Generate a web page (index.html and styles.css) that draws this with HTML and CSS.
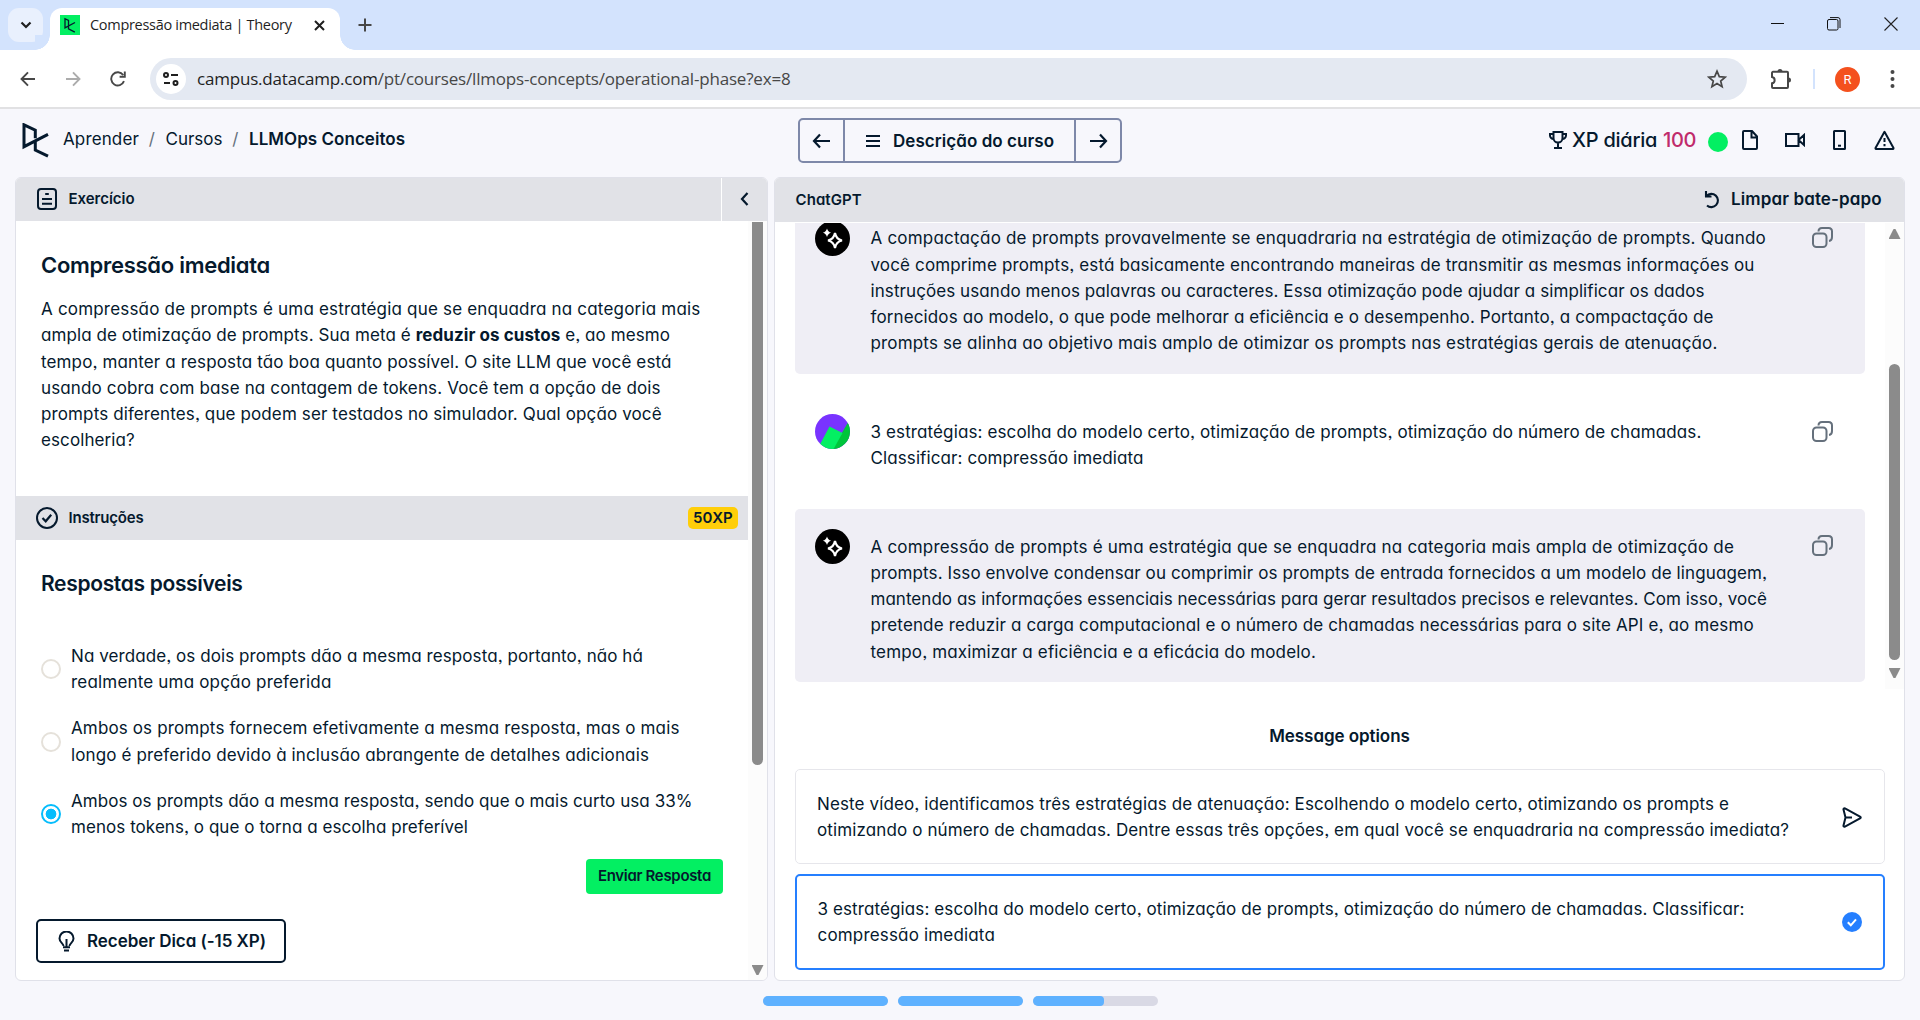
FILE: index.html
```html
<!DOCTYPE html>
<html lang="pt">
<head>
<meta charset="utf-8">
<title>Compressão imediata | Theory</title>
<link rel="stylesheet" href="styles.css">
</head>
<body>
<header class="browser">
  <div class="tabstrip">
    <div class="tab-search"><svg width="12" height="8" viewBox="0 0 12 8"><path d="M1.5 1.5 6 6l4.500-4.500" fill="none" stroke="#1f1f1f" stroke-width="2.200"/></svg></div>
    <div class="tab">
      <svg class="favicon" width="20" height="20" viewBox="0 0 20 20"><path fill="#03ef62" d="M0 0h20v20H0z"/><path d="M8.500 9.700V5.300L5 3.700v9.200l10-5.400M8.500 9.700v4.200l6.300 3.200" fill="none" stroke="#05192d" stroke-width="1.300"/></svg>
      <span class="tab-title">Compressão imediata | Theory</span>
      <svg class="tab-close" width="11" height="11" viewBox="0 0 11 11"><path d="m1 1 9 9M10 1l-9 9" stroke="#1f1f1f" stroke-width="2"/></svg>
    </div>
    <svg class="new-tab" width="14" height="14" viewBox="0 0 14 14"><path d="M7 .5v13M.5 7h13" stroke="#474747" stroke-width="2"/></svg>
    <div class="window-controls">
      <svg width="13" height="14" viewBox="0 0 13 14"><path d="M0 6.500h13" stroke="#111"/></svg>
      <svg width="14" height="14" viewBox="0 0 14 14"><rect x=".5" y="2.500" width="10.500" height="10.500" rx="1.500" fill="none" stroke="#111"/><path d="M3 .6h8a2 2 0 0 1 2 2V11" fill="none" stroke="#111"/></svg>
      <svg width="14" height="14" viewBox="0 0 14 14"><path d="m.5.5 13 13M13.500.5l-13 13" stroke="#222" stroke-width="1.100"/></svg>
    </div>
  </div>
  <div class="toolbar">
    <div class="nav">
      <svg width="16" height="16" viewBox="0 0 16 16"><path d="M15 8H2M8 1.300 1.500 8 8 14.700" fill="none" stroke="#474747" stroke-width="1.900"/></svg>
      <svg width="16" height="16" viewBox="0 0 16 16"><path d="M1 8h13M8 1.300 14.500 8 8 14.700" fill="none" stroke="#acacac" stroke-width="1.900"/></svg>
      <svg width="16" height="16" viewBox="0 0 16 16"><path d="M14 10.200A6.600 6.600 0 1 1 13.200 4M14.800.6v5.200H9.600" fill="none" stroke="#474747" stroke-width="1.900"/></svg>
    </div>
    <div class="omnibox">
      <div class="site-info"><svg width="16" height="14" viewBox="0 0 16 14" fill="none" stroke="#1f1f1f" stroke-width="2"><circle cx="3" cy="3" r="2"/><path d="M8 3h7M1 11h6"/><circle cx="12.500" cy="11" r="2"/></svg></div>
      <span class="url">campus.datacamp.com<i>/pt/courses/llmops-concepts/operational-phase?ex=8</i></span>
      <svg class="star" width="20" height="20" viewBox="0 0 20 20"><path d="m10 2.200 2.300 5.400 5.900.5-4.500 3.900 1.400 5.700-5.100-3.100-5.100 3.100 1.400-5.700L1.800 8.100l5.900-.5z" fill="none" stroke="#474747" stroke-width="1.700"/></svg>
    </div>
    <svg class="puzzle" width="22" height="22" viewBox="0 0 22 22"><path d="M3 3.800h14a1 1 0 0 1 1 1V19a1 1 0 0 1-1 1H3a1 1 0 0 1-1-1v-3.700a3.200 3.200 0 0 0 0-6.300V4.800a1 1 0 0 1 1-1" fill="none" stroke="#474747" stroke-width="2"/><path d="M7.500 3.500a2.500 2.500 0 0 1 5 0zM18.500 9.500a2.500 2.500 0 0 1 0 5z" fill="#474747"/></svg>
    <span class="toolbar-divider"></span>
    <span class="profile">R</span>
    <svg class="kebab" width="5" height="18" viewBox="0 0 5 18" fill="#474747"><circle cx="2.500" cy="2" r="2"/><circle cx="2.500" cy="9" r="2"/><circle cx="2.500" cy="16" r="2"/></svg>
  </div>
</header>

<div class="app">
  <div class="topbar">
    <div class="crumbs">
      <svg class="logo" width="27" height="35" viewBox="0 0 27 35"><path d="M13.300 15.200V7.200L2 1.800v21.900L26 11.300M13.300 17.500v9.500L26 33.200" fill="none" stroke="#05192d" stroke-width="3"/></svg>
      <span class="crumb-a">Aprender</span><i>/</i>
      <span class="crumb-b">Cursos</span><i>/</i>
      <span class="crumb-c">LLMOps Conceitos</span>
    </div>
    <div class="course-nav">
      <div class="prev"><svg width="19" height="16" viewBox="0 0 19 16"><path d="M18 8H3M8 1.500 2 8l6 6.500" fill="none" stroke="#05192d" stroke-width="2.200"/></svg></div>
      <div class="outline"><svg width="14" height="14" viewBox="0 0 14 14"><path d="M0 2h14M0 7h14M0 12h14" stroke="#05192d" stroke-width="2.200"/></svg><span class="outline-label">Descrição do curso</span></div>
      <div class="next"><svg width="19" height="16" viewBox="0 0 19 16"><path d="M1 8h15M11 1.500 17 8l-6 6.500" fill="none" stroke="#05192d" stroke-width="2.200"/></svg></div>
    </div>
    <div class="status">
      <svg class="trophy" width="18" height="18" viewBox="0 0 18 18"><path d="M4.500 1h9v6a4.500 4.500 0 0 1-9 0zM4.500 3H1v1.500A3.500 3.500 0 0 0 4.800 8M13.500 3H17v1.500A3.500 3.500 0 0 1 13.200 8M9 11.500V17M5 17h8" fill="none" stroke="#05192d" stroke-width="2"/></svg>
      <span class="xp">XP diária</span>
      <span class="xp-value">100</span>
      <span class="dot"></span>
      <svg class="i-file" width="16" height="20" viewBox="0 0 16 20"><path d="M2 1h8l5 5.500V18a1 1 0 0 1-1 1H2a1 1 0 0 1-1-1V2a1 1 0 0 1 1-1M9.500 1v6.500H15" fill="none" stroke="#05192d" stroke-width="2"/></svg>
      <svg class="i-video" width="20" height="14" viewBox="0 0 20 14"><path d="M1 1h12.500v12H1zM13.500 7 19 2v10z" fill="none" stroke="#05192d" stroke-width="2"/></svg>
      <svg class="i-phone" width="13" height="20" viewBox="0 0 13 20"><rect x="1" y="1" width="11" height="18" rx=".5" fill="none" stroke="#05192d" stroke-width="2"/><path d="M5 15.700h3" stroke="#05192d" stroke-width="2"/></svg>
      <svg class="i-warn" width="21" height="20" viewBox="0 0 21 20"><path d="M10.500 1.800 19.500 18a.8.8 0 0 1-.6 1H2.100a.8.8 0 0 1-.6-1zM10.500 8v4M10.500 14v2.200" fill="none" stroke="#05192d" stroke-width="2" stroke-linejoin="round"/></svg>
    </div>
  </div>

  <main class="panels">
    <section class="panel exercise">
      <div class="panel-head">
        <div class="head-title">
          <svg width="20" height="22" viewBox="0 0 20 22"><rect x="1" y="1" width="18" height="20" rx="3" fill="none" stroke="#05192d" stroke-width="2"/><path d="M8.200 6h3.600M5 11h10M5 15.700h10" stroke="#05192d" stroke-width="2"/></svg>
          <span class="head-exercise">Exercício</span>
        </div>
        <div class="collapse"><svg width="9" height="14" viewBox="0 0 9 14"><path d="M7.500 1 2 7l5.500 6" fill="none" stroke="#05192d" stroke-width="2.200"/></svg></div>
      </div>
      <div class="panel-body">
        <div class="exercise-scroll">
          <h1>Compressão imediata</h1>
          <p class="prose exercise-text">
            <span>A compressão de prompts é uma estratégia que se enquadra na categoria mais</span>
            <span>ampla de otimização de prompts. Sua meta é <b>reduzir os custos</b> e, ao mesmo</span>
            <span>tempo, manter a resposta tão boa quanto possível. O site LLM que você está</span>
            <span>usando cobra com base na contagem de tokens. Você tem a opção de dois</span>
            <span>prompts diferentes, que podem ser testados no simulador. Qual opção você</span>
            <span>escolheria?</span>
          </p>
          <div class="instructions-head">
            <svg width="22" height="22" viewBox="0 0 22 22" fill="none" stroke="#05192d" stroke-width="2"><circle cx="11" cy="11" r="10"/><path d="m6.500 11 3.200 3.300 5.500-6.600" stroke-width="2.200"/></svg>
            <span class="head-instructions">Instruções</span>
            <span class="xp-badge">50XP</span>
          </div>
          <h2>Respostas possíveis</h2>
          <div class="answers">
            <div class="answer answer-1"><span class="radio"></span><p class="prose">
              <span>Na verdade, os dois prompts dão a mesma resposta, portanto, não há</span>
              <span>realmente uma opção preferida</span></p></div>
            <div class="answer answer-2"><span class="radio"></span><p class="prose">
              <span>Ambos os prompts fornecem efetivamente a mesma resposta, mas o mais</span>
              <span>longo é preferido devido à inclusão abrangente de detalhes adicionais</span></p></div>
            <div class="answer answer-3"><span class="radio selected"></span><p class="prose">
              <span>Ambos os prompts dão a mesma resposta, sendo que o mais curto usa 33%</span>
              <span>menos tokens, o que o torna a escolha preferível</span></p></div>
          </div>
          <div class="submit">Enviar Resposta</div>
          <div class="hint"><svg width="17" height="21" viewBox="0 0 17 21"><path d="M5.500 15C5.500 12.500 1.500 11.500 1.500 7.500a7 7 0 0 1 14 0c0 4-4 5-4 7.500M8.500 8v8M5 16.200h7M6 19.500h5" fill="none" stroke="#05192d" stroke-width="2"/></svg><span>Receber Dica (-15 XP)</span></div>
        </div>
        <div class="scrollbar scrollbar-left"><span class="thumb"></span><span class="arrow down"></span></div>
      </div>
    </section>

    <section class="panel chat">
      <div class="panel-head">
        <span class="head-chat">ChatGPT</span>
        <div class="clear"><svg width="16" height="19" viewBox="0 0 16 19"><path d="M2 1v5.500h5.500M2.500 6A6.600 6.600 0 1 1 3 15.500" fill="none" stroke="#05192d" stroke-width="2.100"/></svg><span>Limpar bate-papo</span></div>
      </div>
      <div class="chat-view">
        <div class="messages">
          <article class="message bot reply-1">
            <svg class="avatar" viewBox="0 0 35 35"><circle cx="17.500" cy="17.500" r="17.500"/><path d="M20 12q1.200 6.300 7 7.500-5.800 1.200-7 7.500-1.200-6.300-7-7.500 5.800-1.200 7-7.500z" fill="none" stroke="#fff" stroke-width="2.200"/><path d="M12 7.500q.9 3.600 4.200 4.300-3.300.7-4.200 4.300-.9-3.600-4.200-4.300 3.300-.7 4.200-4.300z" fill="#fff"/></svg>
            <p class="prose">
              <span>A compactação de prompts provavelmente se enquadraria na estratégia de otimização de prompts. Quando</span>
              <span>você comprime prompts, está basicamente encontrando maneiras de transmitir as mesmas informações ou</span>
              <span>instruções usando menos palavras ou caracteres. Essa otimização pode ajudar a simplificar os dados</span>
              <span>fornecidos ao modelo, o que pode melhorar a eficiência e o desempenho. Portanto, a compactação de</span>
              <span>prompts se alinha ao objetivo mais amplo de otimizar os prompts nas estratégias gerais de atenuação.</span>
            </p>
            <svg class="copy" viewBox="0 0 21 21"><rect x="1" y="6.500" width="13.500" height="13.500" rx="3.500"/><path d="M6.500 4.500C6.500 2 7.500 1 10 1h6.500C19 1 20 2 20 4.500V10c0 2.500-.8 3.800-3 4"/></svg>
          </article>
          <article class="message user">
            <svg class="avatar" viewBox="0 0 35 35"><defs><clipPath id="disc"><circle cx="17.500" cy="17.500" r="17.500"/></clipPath></defs><g clip-path="url(#disc)"><path fill="#7933ff" d="M0 0h35v35H0z"/><path fill="#00c53b" d="M35 5 17 36h18z"/><path fill="#03ef62" d="m14.500 12.500 13 6.500L18 36H2z"/></g></svg>
            <p class="prose">
              <span>3 estratégias: escolha do modelo certo, otimização de prompts, otimização do número de chamadas.</span>
              <span>Classificar: compressão imediata</span>
            </p>
            <svg class="copy" viewBox="0 0 21 21"><rect x="1" y="6.500" width="13.500" height="13.500" rx="3.500"/><path d="M6.500 4.500C6.500 2 7.500 1 10 1h6.500C19 1 20 2 20 4.500V10c0 2.500-.8 3.800-3 4"/></svg>
          </article>
          <article class="message bot reply-2">
            <svg class="avatar" viewBox="0 0 35 35"><circle cx="17.500" cy="17.500" r="17.500"/><path d="M20 12q1.200 6.300 7 7.500-5.800 1.200-7 7.500-1.200-6.300-7-7.500 5.800-1.200 7-7.500z" fill="none" stroke="#fff" stroke-width="2.200"/><path d="M12 7.500q.9 3.600 4.200 4.300-3.300.7-4.200 4.300-.9-3.600-4.200-4.300 3.300-.7 4.200-4.300z" fill="#fff"/></svg>
            <p class="prose">
              <span>A compressão de prompts é uma estratégia que se enquadra na categoria mais ampla de otimização de</span>
              <span>prompts. Isso envolve condensar ou comprimir os prompts de entrada fornecidos a um modelo de linguagem,</span>
              <span>mantendo as informações essenciais necessárias para gerar resultados precisos e relevantes. Com isso, você</span>
              <span>pretende reduzir a carga computacional e o número de chamadas necessárias para o site API e, ao mesmo</span>
              <span>tempo, maximizar a eficiência e a eficácia do modelo.</span>
            </p>
            <svg class="copy" viewBox="0 0 21 21"><rect x="1" y="6.500" width="13.500" height="13.500" rx="3.500"/><path d="M6.500 4.500C6.500 2 7.500 1 10 1h6.500C19 1 20 2 20 4.500V10c0 2.500-.8 3.800-3 4"/></svg>
          </article>
        </div>
        <div class="scrollbar scrollbar-right"><span class="arrow up"></span><span class="thumb"></span><span class="arrow down"></span></div>
      </div>
      <h3>Message options</h3>
      <div class="option">
        <p class="prose">
          <span>Neste vídeo, identificamos três estratégias de atenuação: Escolhendo o modelo certo, otimizando os prompts e</span>
          <span>otimizando o número de chamadas. Dentre essas três opções, em qual você se enquadraria na compressão imediata?</span>
        </p>
        <svg width="20" height="21" viewBox="0 0 20 21"><path d="M1.500 2.600C1.300 1.500 2 1 3 1.400l15 8.100c1 .6 1 1.400 0 2l-15 8.100c-1 .4-1.700-.1-1.500-1.200L3.500 10.500zM3.500 10.500H10" fill="none" stroke="#05192d" stroke-width="2"/></svg>
      </div>
      <div class="option chosen">
        <p class="prose">
          <span>3 estratégias: escolha do modelo certo, otimização de prompts, otimização do número de chamadas. Classificar:</span>
          <span>compressão imediata</span>
        </p>
        <svg width="20" height="20" viewBox="0 0 20 20"><circle cx="10" cy="10" r="10" fill="#257fff"/><path d="m5.800 10.300 3 3 5.200-6" fill="none" stroke="#fff" stroke-width="2"/></svg>
      </div>
    </section>
  </main>

  <footer class="progress">
    <span class="bar"><i style="width:100%"></i></span>
    <span class="bar"><i style="width:100%"></i></span>
    <span class="bar"><i style="width:57%"></i></span>
  </footer>
</div>
</body>
</html>
```
FILE: styles.css
```css
* { box-sizing: border-box; }
body { margin: 0; width: 1920px; height: 1020px; overflow: hidden; background: #f7f7fc; color: #05192d; font-family: Inter, "Open Sans", sans-serif; font-feature-settings: "cv11", "ss03"; }
svg { display: block; flex: none; }
p, h1, h2, h3 { margin: 0; }
i { font-style: normal; }
span { white-space: nowrap; }

/* browser window */
.browser { height: 109px; background: #fff; border-bottom: 2px solid #e1e1e3; font-family: "Open Sans", "Noto Sans", sans-serif; font-feature-settings: normal; color: #1f1f1f; }
.tabstrip { height: 50px; padding: 8px 14px 0 8px; background: #d3e3fd; display: flex; align-items: flex-start; }
.tab-search { width: 35px; height: 34px; border-radius: 11px; background: #e9f0fd; display: grid; place-items: center; }
.tab { position: relative; width: 290px; height: 42px; margin-left: 7px; padding: 0 15px 0 10px; border-radius: 12px 12px 0 0; background: #fff; display: flex; align-items: center; }
.tab::before, .tab::after { content: ""; position: absolute; bottom: 0; width: 15px; height: 15px; }
.tab::before { left: -15px; background: radial-gradient(circle at 0 0, #d3e3fd 14.500px, #fff 15px); }
.tab::after { right: -15px; background: radial-gradient(circle at 100% 0, #d3e3fd 14.500px, #fff 15px); }
.favicon { margin-top: -8px; }
.tab-title { width: 234px; padding-left: 10px; margin-top: -8px; font-size: 14.500px; line-height: 20px; letter-spacing: -.3px; }
.tab-close { margin-top: -8px; }
.new-tab { margin: 10px 0 0 18px; }
.window-controls { display: flex; gap: 43px; margin: 9px 8px 0 auto; }
.toolbar { height: 59px; margin-top: 0; padding: 8px 25px 9px 20px; display: flex; align-items: center; background: linear-gradient(#fff, #fff); height: 57px; padding-bottom: 7px; }
.nav { display: flex; gap: 29px; width: 130px; }
.omnibox { width: 1597px; height: 42px; padding: 0 20px 0 6px; border-radius: 21px; background: #e4e9f2; display: flex; align-items: center; }
.site-info { width: 30px; height: 30px; border-radius: 50%; background: #fff; display: grid; place-items: center; }
.url { margin-left: 11px; font-size: 17px; line-height: 24px; letter-spacing: -.193px; flex: 1; }
.url i { color: #474747; }
.puzzle { margin-left: 23px; }
.toolbar-divider { width: 2px; height: 20px; margin-left: 21px; background: #d3e3fd; }
.profile { width: 25px; height: 25px; margin-left: 20px; border-radius: 50%; background: #f4511e; color: #fff; font: 13px/25px Roboto, sans-serif; text-align: center; }
.kebab { margin-left: auto; }

/* course header */
.app { height: 911px; }
.topbar { height: 68px; padding: 0 25px 0 22px; display: flex; justify-content: space-between; }
.crumbs { width: 776px; display: flex; padding-top: 14px; font-size: 17px; line-height: 32px; }
.crumbs i { color: #65707c; width: 27.500px; text-align: center; }
.crumbs .crumb-a { width: 75px; margin-left: 14px; letter-spacing: .13px; }
.crumbs .crumb-b { width: 56px; }
.crumbs .crumb-c { font-weight: 600; letter-spacing: .04px; }
.course-nav { width: 324px; height: 45px; margin-top: 9px; border: 2px solid #7e88a9; border-radius: 5px; display: grid; grid-template-columns: 43px 1fr 44px; }
.course-nav > div { display: flex; align-items: center; justify-content: center; }
.outline { border: solid #7e88a9; border-width: 0 2px; gap: 13px; font-weight: 600; font-size: 17px; }
.outline-label { width: 160px; letter-spacing: .06px; }
.status { width: 773px; padding-left: 427px; display: flex; align-items: flex-start; font-size: 20px; font-weight: 550; line-height: 30px; }
.trophy { margin-top: 22px; }
.xp { width: 85px; margin: 16px 0 0 5px; letter-spacing: -.25px; }
.xp-value { width: 33px; margin: 16px 0 0 6px; color: #c02b6b; letter-spacing: -.3px; }
.dot { width: 20px; height: 20px; margin: 23px 0 0 12px; border-radius: 50%; background: #03ef62; }
.i-file { margin: 21px 0 0 14px; }
.i-video { margin: 24px 0 0 27px; }
.i-phone { margin: 21px 0 0 28px; }
.i-warn { margin: 21px 0 0 28px; }

/* panels */
.panels { display: flex; gap: 6px; padding-left: 15px; height: 804px; }
.panel { border: 1px solid #e0e1e9; border-radius: 6px; background: #fff; overflow: hidden; }
.panel-head { background: #e1e2e7; display: flex; align-items: center; font-size: 15px; font-weight: 600; }
.exercise { width: 753px; }
.exercise .panel-head { height: 43px; }
.head-title { flex: 1; height: 43px; padding: 0 0 2px 21px; display: flex; align-items: center; gap: 11.500px; }
.head-exercise { letter-spacing: -.03px; }
.collapse { width: 46px; height: 43px; padding-bottom: 1px; border-left: 1px solid #fff; display: grid; place-items: center; }
.panel-body { display: flex; height: 759px; }
.exercise-scroll { width: 732px; }
.prose { font-size: 17px; line-height: 26.250px; }
.prose > span { display: block; width: max-content; }
.prose b { font-weight: 650; }
h1, h2 { padding-left: 25px; font-size: 22px; font-weight: 600; line-height: 30px; letter-spacing: -.28px; }
h1 { padding-top: 29px; }
.exercise-text { height: 199.500px; margin-top: 16px; padding-left: 25px; }
.instructions-head { height: 44px; padding: 0 10px 0 20px; background: #e1e2e7; display: flex; align-items: center; font-size: 15px; font-weight: 600; }
.head-instructions { margin-left: 10.500px; flex: 1; letter-spacing: -.2px; }
.xp-badge { width: 50px; height: 22px; border-radius: 5px; background: #ffce09; line-height: 22px; padding-left: 5px; letter-spacing: .18px; }
h2 { padding-top: 29px; font-size: 21px; letter-spacing: -.33px; }
.answers { padding: 44px 0 0 25px; display: grid; gap: 20.250px; }
.answer { display: flex; align-items: center; gap: 10px; }
.radio { width: 20px; height: 20px; border: 2px solid #e5e1da; border-radius: 50%; }
.radio.selected { border-color: #06bdfc; background: radial-gradient(circle, #06bdfc 5px, #fff 5.700px); }
.submit { width: 137px; height: 35px; margin: 18.500px 0 0 570px; padding-left: 12px; border-radius: 4px; background: #03ef62; font-size: 15px; font-weight: 600; line-height: 34px; letter-spacing: -.32px; }
.hint { width: 250px; height: 44px; margin: 25px 0 0 20px; padding-left: 20px; border: 2px solid #05192d; border-radius: 5px; display: flex; align-items: center; gap: 12px; font-size: 17px; font-weight: 600; letter-spacing: -.05px; }

.scrollbar { width: 19px; background: #fcfcfc; display: flex; flex-direction: column; align-items: center; }
.thumb { width: 11px; background: #8b8b8b; border-radius: 6px; }
.arrow { width: 12px; height: 10px; background: #8b8b8b; }
.down { clip-path: polygon(0 0, 100% 0, 58% 100%, 42% 100%); }
.up { clip-path: polygon(42% 0, 58% 0, 100% 100%, 0 100%); }
.scrollbar-left { padding-top: 1px; }
.scrollbar-left .thumb { height: 543px; border-radius: 0 0 6px 6px; }
.scrollbar-left .arrow { margin-top: 200px; }
.scrollbar-right { padding-top: 6px; }
.scrollbar-right .thumb { height: 296px; margin: 125px 0 8px; }

/* chat */
.chat { width: 1131px; }
.chat .panel-head { height: 44px; padding: 0 22px 2px 20.500px; justify-content: space-between; }
.head-chat { letter-spacing: .08px; }
.clear { display: flex; align-items: center; gap: 11px; font-size: 17px; letter-spacing: .12px; }
.clear span { width: 151px; }
.chat-view { height: 467px; padding-top: 1px; display: flex; }
.messages { width: 1110px; height: 466px; padding-left: 20px; overflow: hidden; }
.message { width: 1070px; padding: 20px 32px 17px 20px; border-radius: 5px; display: flex; align-items: flex-start; }
.message:first-child { margin-top: -22.500px; }
.bot { background: #efeef5; }
.user { margin: 20.500px 0; }
.avatar { width: 35px; height: 35px; }
.message .prose { margin: 4.800px 0 0 20.500px; flex: 1; }
.copy { width: 21px; height: 21px; margin-top: 6.500px; fill: none; stroke: #65707c; stroke-width: 2; }
h3 { height: 80px; padding: 32px 0 0 0; font-size: 17px; font-weight: 600; line-height: 30px; text-align: center; letter-spacing: -.067px; }
.option { width: 1090px; height: 95px; margin-left: 20px; padding: 20.500px 22px 0 21px; border: 1px solid #e6e6eb; border-radius: 5px; display: flex; justify-content: space-between; }
.option svg { margin-top: 16px; }
.chosen { height: 96px; margin-top: 10px; padding: 20px 21px 0 20.500px; border: 2px solid #257fff; }

/* tracking of each copy line */
.exercise-text span:nth-child(1) { letter-spacing: .193px; }
.exercise-text span:nth-child(2) { letter-spacing: .083px; }
.exercise-text span:nth-child(3) { letter-spacing: .142px; }
.exercise-text span:nth-child(4) { letter-spacing: .142px; }
.exercise-text span:nth-child(5) { letter-spacing: .121px; }
.exercise-text span:nth-child(6) { letter-spacing: .094px; }
.answer-1 .prose span:nth-child(1) { letter-spacing: .078px; }
.answer-1 .prose span:nth-child(2) { letter-spacing: .187px; }
.answer-2 .prose span:nth-child(1) { letter-spacing: .136px; }
.answer-2 .prose span:nth-child(2) { letter-spacing: .133px; }
.answer-3 .prose span { letter-spacing: .061px; }
.reply-1 .prose span:nth-child(1) { letter-spacing: .197px; }
.reply-1 .prose span:nth-child(2) { letter-spacing: .142px; }
.reply-1 .prose span:nth-child(3) { letter-spacing: .082px; }
.reply-1 .prose span:nth-child(4) { letter-spacing: .122px; }
.reply-1 .prose span:nth-child(5) { letter-spacing: .161px; }
.user .prose span:nth-child(1) { letter-spacing: .118px; }
.user .prose span:nth-child(2) { letter-spacing: .099px; }
.reply-2 .prose span:nth-child(1) { letter-spacing: .202px; }
.reply-2 .prose span:nth-child(2) { letter-spacing: .108px; }
.reply-2 .prose span:nth-child(3) { letter-spacing: .033px; }
.reply-2 .prose span:nth-child(4) { letter-spacing: .139px; }
.reply-2 .prose span:nth-child(5) { letter-spacing: .168px; }
.option .prose span:nth-child(1) { letter-spacing: .117px; }
.option .prose span:nth-child(2) { letter-spacing: .122px; }
.chosen .prose span:nth-child(1) { letter-spacing: .108px; }
.chosen .prose span:nth-child(2) { letter-spacing: .172px; }

/* lesson progress */
.progress { display: flex; justify-content: center; gap: 10px; padding-top: 15px; }
.bar { width: 125px; height: 10px; border-radius: 5px; background: #d9d9e5; overflow: hidden; }
.bar i { display: block; height: 10px; background: #5eb1ff; border-radius: 0 4px 4px 0; }
```
